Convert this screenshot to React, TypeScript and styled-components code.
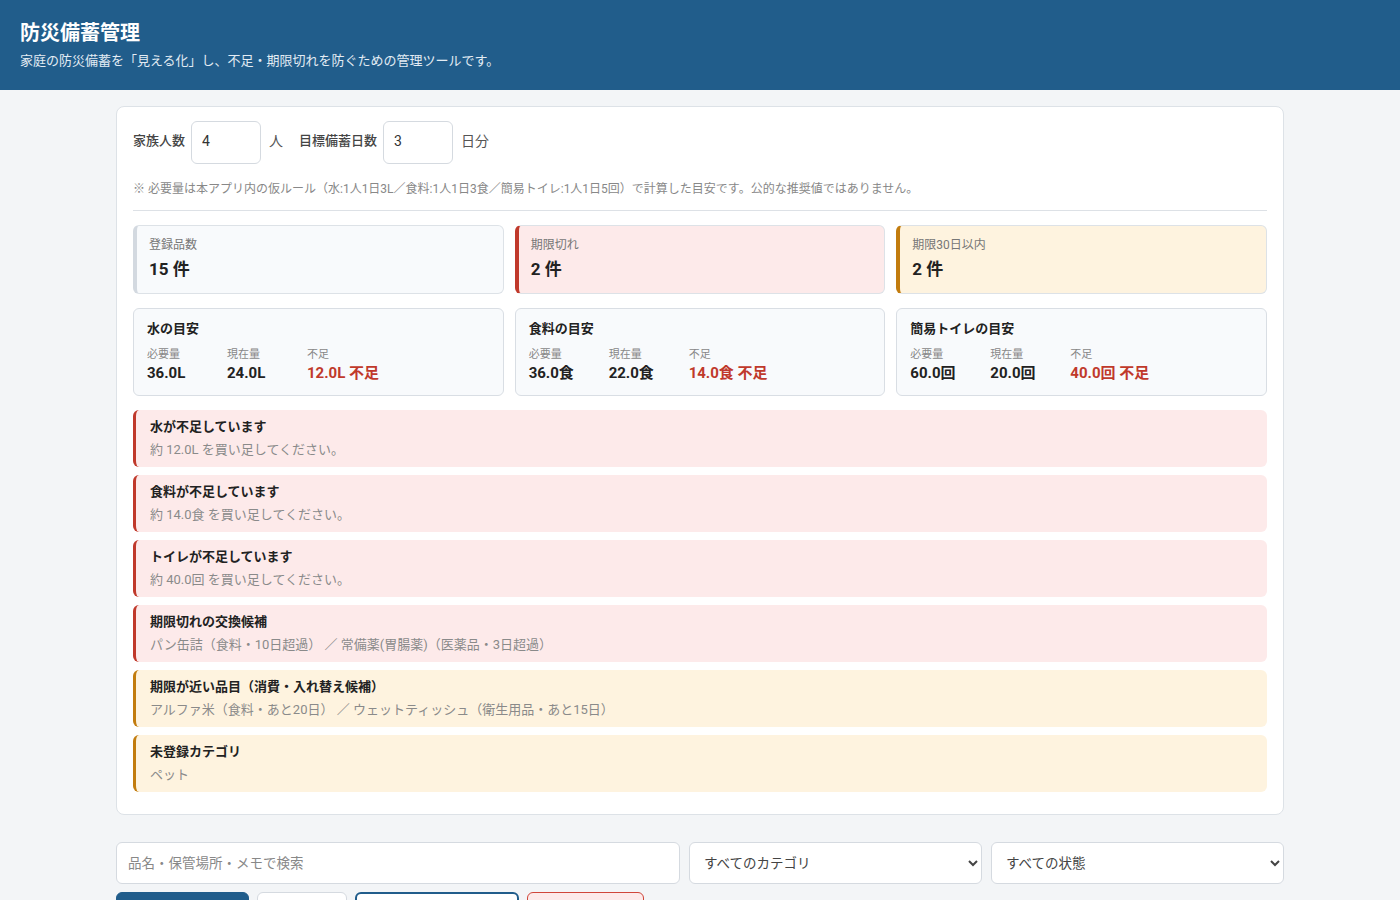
import styled, { createGlobalStyle } from "styled-components";

type Tone = "neutral" | "danger" | "warning";

const toneBorder: Record<Tone, string> = {
  neutral: "#d3d9e0",
  danger: "#c0392b",
  warning: "#c27c0e",
};

const toneBg: Record<Tone, string> = {
  neutral: "#f8fafc",
  danger: "#fdeaea",
  warning: "#fef3df",
};

const GlobalStyle = createGlobalStyle`
  * { box-sizing: border-box; }
  body {
    margin: 0;
    background: #f3f5f7;
    color: #222;
    font-family: Roboto, "Noto Sans CJK JP", sans-serif;
  }
  input, select, button { font-family: inherit; }
`;

const Header = styled.header`
  background: #215d8b;
  color: #fff;
  padding: 20px 20px;
  height: 90px;

  h1 {
    margin: 0 0 6px;
    font-size: 20px;
    line-height: 26px;
    font-weight: 700;
  }

  p {
    margin: 0;
    font-size: 13px;
    line-height: 18px;
    color: #e3ecf4;
  }
`;

const Main = styled.main`
  width: 1168px;
  margin: 16px auto 0;
`;

const Panel = styled.section`
  background: #fff;
  border: 1px solid #dde2e7;
  border-radius: 8px;
  padding: 14px 16px 22px;
`;

const SettingsRow = styled.div`
  display: flex;
  align-items: center;
  font-size: 13px;
  line-height: 16px;

  .label {
    font-weight: 500;
    color: #444;
    margin: -3px 6px 0 0;
  }

  .unit {
    font-size: 14px;
    color: #555;
    margin: -3px 16px 0 8px;
  }
`;

const NumberInput = styled.input`
  width: 70px;
  height: 43px;
  border: 1px solid #d5dae0;
  border-radius: 6px;
  padding: 0 10px 3px;
  font-size: 14px;
  color: #333;
  background: #fff;
`;

const Note = styled.p`
  margin: 17px 0 0;
  padding-bottom: 13px;
  border-bottom: 1px solid #dde1e6;
  font-size: 12px;
  line-height: 16px;
  color: #888;
`;

const StatGrid = styled.div`
  display: grid;
  grid-template-columns: repeat(3, 1fr);
  gap: 11px;
  margin-top: 14px;
`;

const StatCard = styled.div<{ tone: Tone }>`
  border: 1px solid #dde2e7;
  border-left: 4px solid ${(p) => toneBorder[p.tone]};
  background: ${(p) => toneBg[p.tone]};
  border-radius: 6px;
  padding: 11px 14px 10px 12px;
  height: 69px;

  .label {
    font-size: 12px;
    line-height: 16px;
    color: #777;
  }

  .value {
    margin-top: 4px;
    font-size: 17px;
    line-height: 24px;
    font-weight: 700;
    color: #222;
  }
`;

const GaugeGrid = styled(StatGrid)`
  margin-top: 14px;
`;

const GaugeCard = styled.div`
  border: 1px solid #d9dee4;
  background: #f8fafc;
  border-radius: 6px;
  padding: 12px 13px 12px;
  height: 88px;

  h3 {
    margin: 0 0 10px;
    font-size: 13px;
    line-height: 16px;
    font-weight: 700;
    color: #222;
  }
`;

const GaugeRow = styled.div`
  display: flex;
`;

const GaugeItem = styled.div<{ short?: boolean }>`
  width: 80px;
  white-space: nowrap;

  .k {
    font-size: 11px;
    line-height: 15px;
    color: #888;
  }

  .v {
    margin-top: 1px;
    font-size: 15px;
    line-height: 20px;
    font-weight: 700;
    color: ${(p) => (p.short ? "#c0392b" : "#222")};
  }
`;

const AlertList = styled.div`
  display: flex;
  flex-direction: column;
  gap: 8px;
  margin-top: 14px;
`;

const Alert = styled.div<{ tone: Tone }>`
  background: ${(p) => toneBg[p.tone]};
  border-left: 3px solid ${(p) => toneBorder[p.tone]};
  border-radius: 6px;
  padding: 8px 14px 9px;
  height: 57px;

  .title {
    font-size: 13px;
    line-height: 18px;
    font-weight: 700;
    color: #222;
  }

  .body {
    margin-top: 5px;
    font-size: 13px;
    line-height: 18px;
    color: #8a8a8a;
  }
`;

const Toolbar = styled.div`
  display: grid;
  grid-template-columns: 1fr 293px 293px;
  gap: 9px;
  margin-top: 27px;
`;

const SearchInput = styled.input`
  height: 42px;
  border: 1px solid #d5dae0;
  border-radius: 6px;
  padding: 0 11px;
  font-size: 13.5px;
  background: #fff;
  color: #333;

  &::placeholder {
    color: #888;
  }
`;

const Select = styled.select`
  height: 42px;
  border: 1px solid #d5dae0;
  border-radius: 6px;
  padding: 0 8px 0 10px;
  font-size: 13.5px;
  background: #fff;
  color: #444;
`;

const ButtonRow = styled.div`
  display: flex;
  gap: 8px;
  margin-top: 8px;
  padding-bottom: 16px;
`;

type Variant = "primary" | "plain" | "focus" | "danger";

const Button = styled.button<{ variant: Variant; w: number }>`
  width: ${(p) => p.w}px;
  height: 40px;
  padding: 12px 12px 0;
  border-radius: 6px;
  font-size: 13px;
  font-weight: 600;
  white-space: nowrap;
  cursor: pointer;
  border: ${(p) => (p.variant === "focus" ? "2px solid #215d8b" : "1px solid")};
  border-color: ${(p) =>
    p.variant === "primary"
      ? "#215d8b"
      : p.variant === "danger"
      ? "#d0463a"
      : p.variant === "focus"
      ? "#215d8b"
      : "#d5dae0"};
  background: ${(p) =>
    p.variant === "primary" ? "#215d8b" : p.variant === "danger" ? "#fdeaea" : "#fff"};
  color: ${(p) =>
    p.variant === "primary" ? "#fff" : p.variant === "danger" ? "#c0392b" : "#333"};
`;

const stats: { label: string; value: string; tone: Tone }[] = [
  { label: "登録品数", value: "15 件", tone: "neutral" },
  { label: "期限切れ", value: "2 件", tone: "danger" },
  { label: "期限30日以内", value: "2 件", tone: "warning" },
];

const gauges = [
  { title: "水の目安", need: "36.0L", have: "24.0L", lack: "12.0L 不足" },
  { title: "食料の目安", need: "36.0食", have: "22.0食", lack: "14.0食 不足" },
  { title: "簡易トイレの目安", need: "60.0回", have: "20.0回", lack: "40.0回 不足" },
];

const alerts: { title: string; body: string; tone: Tone }[] = [
  { title: "水が不足しています", body: "約 12.0L を買い足してください。", tone: "danger" },
  { title: "食料が不足しています", body: "約 14.0食 を買い足してください。", tone: "danger" },
  { title: "トイレが不足しています", body: "約 40.0回 を買い足してください。", tone: "danger" },
  {
    title: "期限切れの交換候補",
    body: "パン缶詰（食料・10日超過） ／ 常備薬(胃腸薬)（医薬品・3日超過）",
    tone: "danger",
  },
  {
    title: "期限が近い品目（消費・入れ替え候補）",
    body: "アルファ米（食料・あと20日） ／ ウェットティッシュ（衛生用品・あと15日）",
    tone: "warning",
  },
  { title: "未登録カテゴリ", body: "ペット", tone: "warning" },
];

export default function App() {
  return (
    <>
      <GlobalStyle />
      <Header>
        <h1>防災備蓄管理</h1>
        <p>家庭の防災備蓄を「見える化」し、不足・期限切れを防ぐための管理ツールです。</p>
      </Header>
      <Main>
        <Panel>
          <SettingsRow>
            <span className="label">家族人数</span>
            <NumberInput type="text" defaultValue="4" />
            <span className="unit">人</span>
            <span className="label">目標備蓄日数</span>
            <NumberInput type="text" defaultValue="3" />
            <span className="unit">日分</span>
          </SettingsRow>
          <Note>
            ※ 必要量は本アプリ内の仮ルール（水:1人1日3L／食料:1人1日3食／簡易トイレ:1人1日5回）で計算した目安です。公的な推奨値ではありません。
          </Note>

          <StatGrid>
            {stats.map((s) => (
              <StatCard key={s.label} tone={s.tone}>
                <div className="label">{s.label}</div>
                <div className="value">{s.value}</div>
              </StatCard>
            ))}
          </StatGrid>

          <GaugeGrid>
            {gauges.map((g) => (
              <GaugeCard key={g.title}>
                <h3>{g.title}</h3>
                <GaugeRow>
                  <GaugeItem>
                    <div className="k">必要量</div>
                    <div className="v">{g.need}</div>
                  </GaugeItem>
                  <GaugeItem>
                    <div className="k">現在量</div>
                    <div className="v">{g.have}</div>
                  </GaugeItem>
                  <GaugeItem short>
                    <div className="k">不足</div>
                    <div className="v">{g.lack}</div>
                  </GaugeItem>
                </GaugeRow>
              </GaugeCard>
            ))}
          </GaugeGrid>

          <AlertList>
            {alerts.map((a) => (
              <Alert key={a.title} tone={a.tone}>
                <div className="title">{a.title}</div>
                <div className="body">{a.body}</div>
              </Alert>
            ))}
          </AlertList>
        </Panel>

        <Toolbar>
          <SearchInput placeholder="品名・保管場所・メモで検索" />
          <Select defaultValue="all">
            <option value="all">すべてのカテゴリ</option>
          </Select>
          <Select defaultValue="all">
            <option value="all">すべての状態</option>
          </Select>
        </Toolbar>
        <ButtonRow>
          <Button variant="primary" w={133}>＋ 品目を追加</Button>
          <Button variant="plain" w={90}>CSV出力</Button>
          <Button variant="focus" w={164}>バックアップを保存</Button>
          <Button variant="danger" w={117}>データを初期化</Button>
        </ButtonRow>
      </Main>
    </>
  );
}
